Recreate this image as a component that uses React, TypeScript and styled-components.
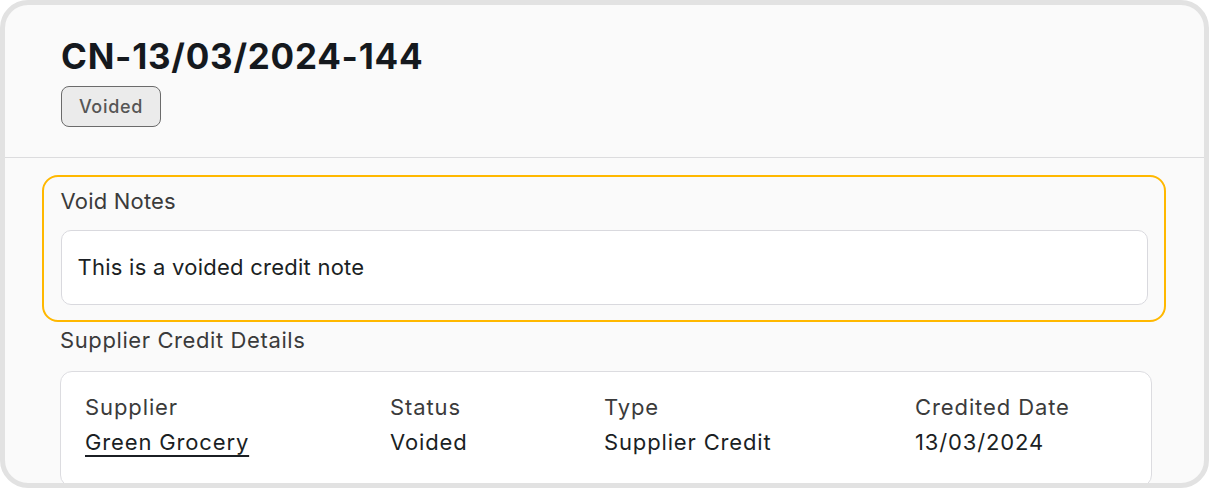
import styled, {createGlobalStyle} from "styled-components";

const GlobalStyle = createGlobalStyle`
  html, body {
    margin: 0;
    padding: 0;
    background: #ffffff;
  }
  body {
    font-family: Inter, "Noto Sans", sans-serif;
  }
`;

const Frame = styled.div`
  box-sizing: border-box;
  width: 1209px;
  height: 488px;
  border: 5px solid #e2e2e2;
  border-radius: 28px;
  background: #fafafa;
  overflow: hidden;
`;

const Header = styled.header`
  padding: 31px 56px 30px;
  border-bottom: 1px solid #dcdcde;
`;

const Title = styled.h1`
  margin: 0;
  font-size: 35px;
  line-height: 40px;
  font-weight: 700;
  color: #15191e;
  letter-spacing: 0.75px;
`;

const Badge = styled.span`
  box-sizing: border-box;
  display: inline-flex;
  align-items: center;
  justify-content: center;
  margin-top: 10px;
  width: 100px;
  height: 41px;
  border: 1.5px solid #6b6b6b;
  border-radius: 8px;
  background: #ebebeb;
  color: #555;
  font-size: 18px;
  font-weight: 500;
  letter-spacing: 0.7px;
`;

const Body = styled.main`
  padding: 17px 38px 0 37px;
`;

const NotesBox = styled.section`
  box-sizing: border-box;
  border: 2.5px solid #ffb800;
  border-radius: 16px;
  padding: 9.5px 16.5px 15.5px;
`;

const SectionLabel = styled.div<{ $spacing?: number }>`
  font-size: 22px;
  line-height: 28px;
  color: #3b3b3b;
  letter-spacing: ${p => p.$spacing ?? 0.2}px;
`;

const NoteField = styled.div`
  box-sizing: border-box;
  margin-top: 15px;
  height: 75px;
  display: flex;
  align-items: center;
  padding: 0 16px;
  background: #fff;
  border: 1px solid #d9d9de;
  border-radius: 10px;
  font-size: 22px;
  letter-spacing: 0.25px;
  color: #1b1f24;
`;

const Details = styled.section`
  margin: 4px 14px 0 18px;
`;

const DetailsCard = styled.div`
  margin-top: 17px;
  background: #fff;
  border: 1px solid #dcdce0;
  border-radius: 12px;
  padding: 21px 24px 30px;
  display: grid;
  grid-template-columns: 305px 214px 311px 1fr;
`;

const Field = styled.div`
  display: flex;
  flex-direction: column;
  gap: 7px;
`;

const FieldLabel = styled.span`
  font-size: 22px;
  line-height: 28px;
  letter-spacing: 0.9px;
  color: #3b3b3b;
`;

const FieldValue = styled.span<{ $link?: boolean }>`
  font-size: 22px;
  line-height: 28px;
  letter-spacing: 0.85px;
  color: #1b1f24;
  text-decoration: ${p => (p.$link ? "underline" : "none")};
  text-underline-offset: 5px;
  text-decoration-thickness: 1.5px;
  align-self: flex-start;
`;

const fields = [
  {label: "Supplier", value: "Green Grocery", link: true},
  {label: "Status", value: "Voided"},
  {label: "Type", value: "Supplier Credit"},
  {label: "Credited Date", value: "13/03/2024"},
];

function App() {
  return (
    <>
      <GlobalStyle/>
      <Frame>
        <Header>
          <Title>CN-13/03/2024-144</Title>
          <Badge>Voided</Badge>
        </Header>
        <Body>
          <NotesBox>
            <SectionLabel>Void Notes</SectionLabel>
            <NoteField>This is a voided credit note</NoteField>
          </NotesBox>
          <Details>
            <SectionLabel $spacing={0.6}>Supplier Credit Details</SectionLabel>
            <DetailsCard>
              {fields.map(f => (
                <Field key={f.label}>
                  <FieldLabel>{f.label}</FieldLabel>
                  <FieldValue $link={f.link}>{f.value}</FieldValue>
                </Field>
              ))}
            </DetailsCard>
          </Details>
        </Body>
      </Frame>
    </>
  );
}

export default App;
